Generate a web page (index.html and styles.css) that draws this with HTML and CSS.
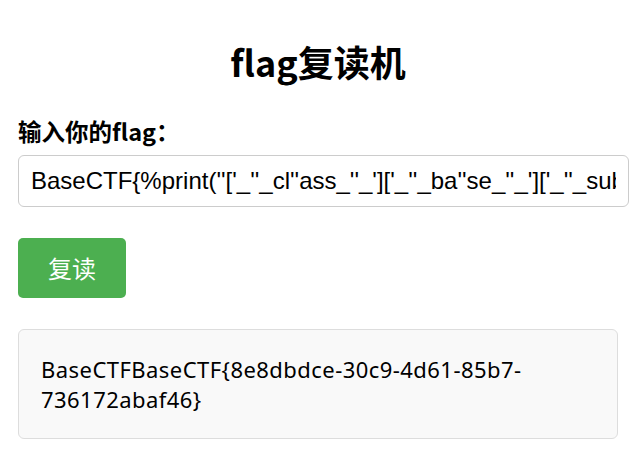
FILE: index.html
```html
<!DOCTYPE html>
<html lang="zh-CN">
<head>
<meta charset="utf-8">
<title>flag复读机</title>
<link rel="stylesheet" href="styles.css">
</head>
<body>
<main class="page">
  <h1 class="title">flag复读机</h1>
  <form class="form">
    <label class="label" for="flag">输入你的flag：</label>
    <input class="input" id="flag" type="text" value="BaseCTF{%print(''['_''_cl''ass_''_']['_''_ba''se_''_']['_''_subcl''asses_''_']()}">
    <button class="button" type="button">复读</button>
  </form>
  <div class="result">BaseCTFBaseCTF{8e8dbdce-30c9-4d61-85b7-736172abaf46}</div>
</main>
</body>
</html>
```
FILE: styles.css
```css
html, body {
  margin: 0;
  padding: 0;
  background: #fff;
}

body {
  font-family: "Noto Sans CJK SC", "Noto Sans", sans-serif;
  color: #000;
}

.page {
  width: 600px;
  margin: 0 18px;
  padding-top: 39px;
}

.title {
  margin: 0 0 33px;
  font-size: 36px;
  line-height: 44px;
  font-weight: 700;
  text-align: center;
}

.form {
  display: flex;
  flex-direction: column;
  align-items: flex-start;
}

.label {
  display: block;
  font-size: 23.5px;
  line-height: 30px;
  font-weight: 700;
  margin-bottom: 9px;
}

.input {
  display: block;
  box-sizing: border-box;
  width: calc(100% + 11px);
  height: 52px;
  margin: 0;
  padding: 0 12px;
  border: 1px solid #ccc;
  border-radius: 6px;
  font-family: "Liberation Sans", Arial, sans-serif;
  font-size: 24px;
  color: #000;
  background: #fff;
  outline: none;
}

.button {
  margin-top: 31px;
  padding: 14px 30px;
  border: none;
  border-radius: 5px;
  background: #4caf50;
  color: #fff;
  font-family: "Noto Sans CJK SC", sans-serif;
  font-size: 24px;
  line-height: 32px;
  cursor: pointer;
}

.result {
  margin-top: 31px;
  box-sizing: border-box;
  width: 600px;
  padding: 24px 22px;
  border: 1px solid #ddd;
  border-radius: 6px;
  background: #f9f9f9;
  font-family: "Noto Sans", "Noto Sans CJK SC", sans-serif;
  font-size: 22px;
  line-height: 30px;
  letter-spacing: 0.45px;
  word-wrap: break-word;
}
```
